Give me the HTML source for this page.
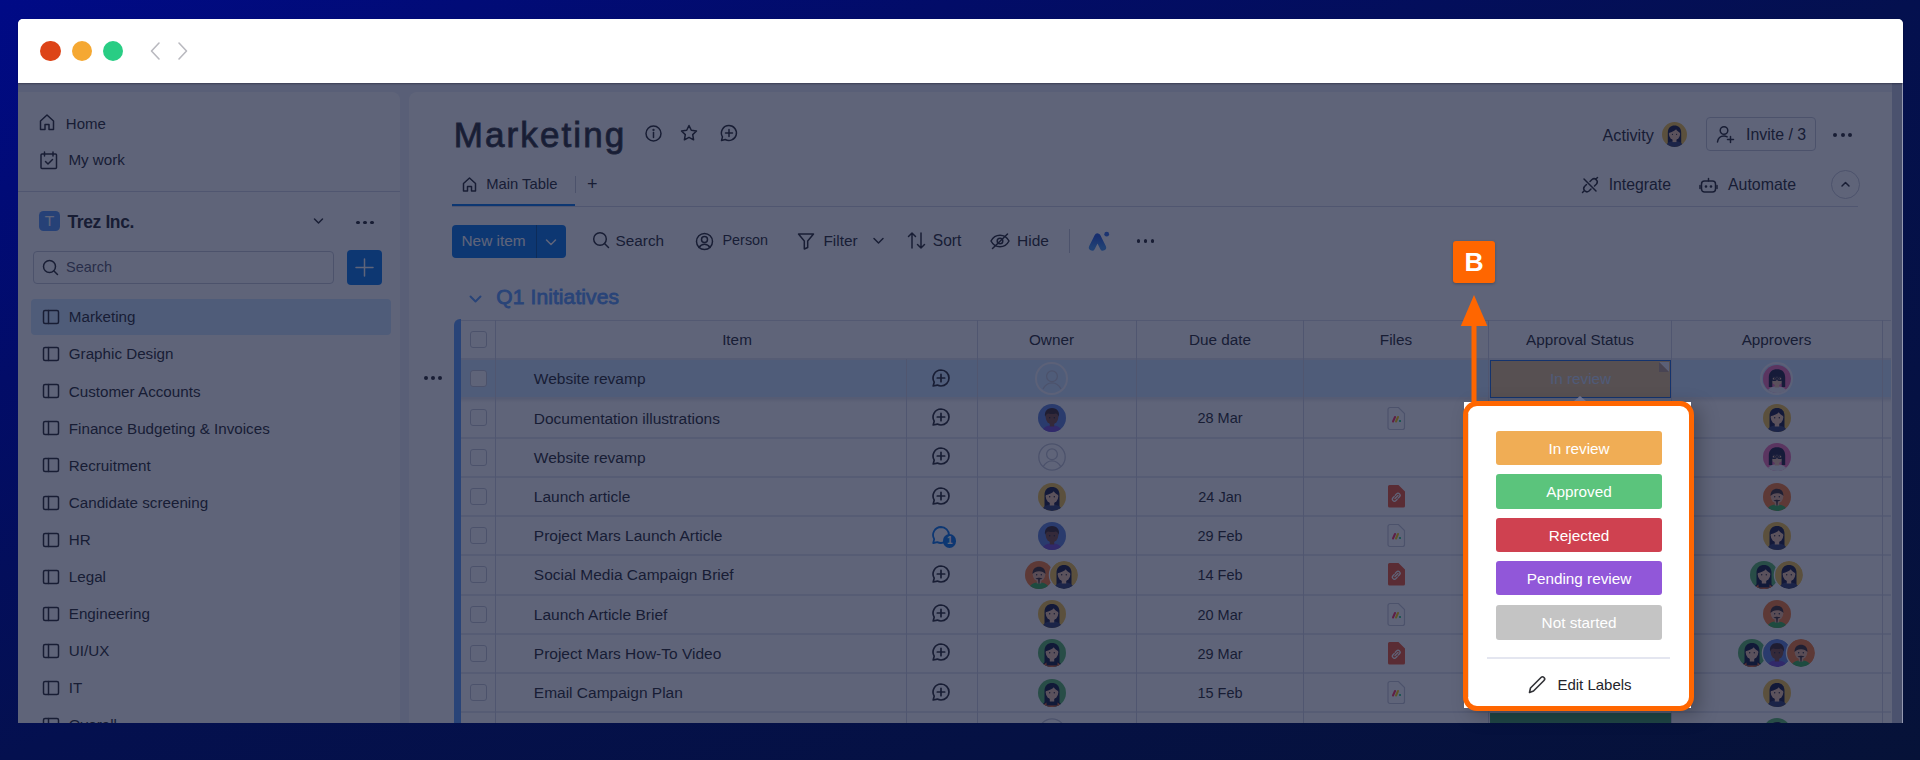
<!DOCTYPE html><html><head><meta charset="utf-8"><style>
html,body{margin:0;padding:0;}
body{width:1920px;height:760px;overflow:hidden;position:relative;font-family:"Liberation Sans", sans-serif;
background:linear-gradient(to bottom right,#000a86 0%,#020c68 25%,#04104f 50%,#061238 100%);}
.t{position:absolute;line-height:1;white-space:nowrap;}
.b{position:absolute;box-sizing:border-box;}
#win{position:absolute;left:17.5px;top:19px;width:1885px;height:704px;overflow:hidden;border-radius:5px 5px 0 0;background:#eceff8;}
#app{position:absolute;left:0;top:0;width:1920px;height:760px;}
#ov{position:absolute;left:17.5px;top:83px;width:1885px;height:640px;background:rgba(19,26,57,0.68);}
</style></head><body>

<div id="win"></div>
<div id="app" style="clip-path:inset(83px 17.5px 37px 17.5px);">
<div class="b" style="left:17.5px;top:91.5px;width:382.5px;height:668.5px;background:#fff;border-radius:0 8px 0 0;"></div>
<div class="b" style="left:409.0px;top:91.5px;width:1483.0px;height:668.5px;background:#fff;border-radius:8px 0 0 0;"></div>
<div class="b" style="left:1892.0px;top:83.0px;width:10.5px;height:677.0px;background:#c2c8dc;"></div>
<svg class="b" style="left:38.0px;top:113.0px;" width="18" height="18" viewBox="0 0 18 18" fill="none" stroke="#24252b" stroke-width="1.5" stroke-linecap="round" stroke-linejoin="round"><path d="M2.5 16.5V8L9 2l6.5 6v8.5h-4.5v-5h-4v5z"/></svg>
<div class="t" style="left:65.8px;top:115.92px;font-size:15px;color:#24252b;">Home</div>
<svg class="b" style="left:38.5px;top:150.0px;" width="20" height="20" viewBox="0 0 20 20" fill="none" stroke="#24252b" stroke-width="1.5" stroke-linecap="round" stroke-linejoin="round"><rect x="2" y="4" width="15.5" height="14.5" rx="1"/><path d="M5.5 2v4M14 2v4M6.5 11.5l2.5 2.5 4.5-4.5"/></svg>
<div class="t" style="left:68.4px;top:152.29px;font-size:15.2px;color:#24252b;">My work</div>
<div class="b" style="left:17.5px;top:190.5px;width:382.5px;height:1.0px;background:#d0d4e4;"></div>
<div class="b" style="left:38.6px;top:210.6px;width:21.8px;height:20.2px;background:#4f92f8;border-radius:4.5px;"></div>
<div class="t" style="left:-150.5px;width:400px;text-align:center;top:213.44px;font-size:15.5px;color:#fff;">T</div>
<div class="t" style="left:67.5px;top:214.13px;font-size:17.5px;color:#24252b;font-weight:bold;letter-spacing:-0.4px;">Trez Inc.</div>
<svg class="b" style="left:312.0px;top:215.0px;" width="13" height="12" viewBox="0 0 13 12" fill="none" stroke="#24252b" stroke-width="1.5" stroke-linecap="round" stroke-linejoin="round"><path d="M2.5 4l4 4 4-4"/></svg>
<div class="b" style="left:356.4px;top:220.6px;width:3.2px;height:3.2px;background:#24252b;border-radius:50%;"></div>
<div class="b" style="left:363.4px;top:220.6px;width:3.2px;height:3.2px;background:#24252b;border-radius:50%;"></div>
<div class="b" style="left:370.4px;top:220.6px;width:3.2px;height:3.2px;background:#24252b;border-radius:50%;"></div>
<div class="b" style="left:33.4px;top:250.5px;width:300.4px;height:33.9px;border:1px solid #c3c6d4;border-radius:4px;"></div>
<svg class="b" style="left:41.0px;top:258.0px;" width="19" height="19" viewBox="0 0 19 19" fill="none" stroke="#24252b" stroke-width="1.5" stroke-linecap="round" stroke-linejoin="round"><circle cx="8.5" cy="8.5" r="6"/><path d="M13 13l3.5 3.5"/></svg>
<div class="t" style="left:66.0px;top:259.90px;font-size:14.5px;color:#55566a;">Search</div>
<div class="b" style="left:347.0px;top:250.0px;width:35.0px;height:34.8px;background:#0073ea;border-radius:4px;"></div>
<svg class="b" style="left:354.0px;top:257.0px;stroke:#fff;" width="21" height="21" viewBox="0 0 21 21" fill="none" stroke="#24252b" stroke-width="1.5" stroke-linecap="round" stroke-linejoin="round"><path d="M10.5 2v17M2 10.5h17"/></svg>
<div class="b" style="left:30.9px;top:299.2px;width:360.4px;height:35.7px;background:#cce5ff;border-radius:4px;"></div>
<svg class="b" style="left:42.0px;top:309.0px;" width="18" height="16" viewBox="0 0 18 16" fill="none" stroke="#24252b" stroke-width="1.5" stroke-linecap="round" stroke-linejoin="round"><rect x="1.5" y="1.5" width="15" height="13" rx="1.5"/><path d="M6.5 1.5v13"/></svg>
<div class="t" style="left:68.8px;top:309.39px;font-size:15.2px;color:#24252b;">Marketing</div>
<svg class="b" style="left:42.0px;top:346.1px;" width="18" height="16" viewBox="0 0 18 16" fill="none" stroke="#24252b" stroke-width="1.5" stroke-linecap="round" stroke-linejoin="round"><rect x="1.5" y="1.5" width="15" height="13" rx="1.5"/><path d="M6.5 1.5v13"/></svg>
<div class="t" style="left:68.8px;top:346.49px;font-size:15.2px;color:#24252b;">Graphic Design</div>
<svg class="b" style="left:42.0px;top:383.2px;" width="18" height="16" viewBox="0 0 18 16" fill="none" stroke="#24252b" stroke-width="1.5" stroke-linecap="round" stroke-linejoin="round"><rect x="1.5" y="1.5" width="15" height="13" rx="1.5"/><path d="M6.5 1.5v13"/></svg>
<div class="t" style="left:68.8px;top:383.59px;font-size:15.2px;color:#24252b;">Customer Accounts</div>
<svg class="b" style="left:42.0px;top:420.3px;" width="18" height="16" viewBox="0 0 18 16" fill="none" stroke="#24252b" stroke-width="1.5" stroke-linecap="round" stroke-linejoin="round"><rect x="1.5" y="1.5" width="15" height="13" rx="1.5"/><path d="M6.5 1.5v13"/></svg>
<div class="t" style="left:68.8px;top:420.69px;font-size:15.2px;color:#24252b;">Finance Budgeting &amp; Invoices</div>
<svg class="b" style="left:42.0px;top:457.4px;" width="18" height="16" viewBox="0 0 18 16" fill="none" stroke="#24252b" stroke-width="1.5" stroke-linecap="round" stroke-linejoin="round"><rect x="1.5" y="1.5" width="15" height="13" rx="1.5"/><path d="M6.5 1.5v13"/></svg>
<div class="t" style="left:68.8px;top:457.79px;font-size:15.2px;color:#24252b;">Recruitment</div>
<svg class="b" style="left:42.0px;top:494.5px;" width="18" height="16" viewBox="0 0 18 16" fill="none" stroke="#24252b" stroke-width="1.5" stroke-linecap="round" stroke-linejoin="round"><rect x="1.5" y="1.5" width="15" height="13" rx="1.5"/><path d="M6.5 1.5v13"/></svg>
<div class="t" style="left:68.8px;top:494.89px;font-size:15.2px;color:#24252b;">Candidate screening</div>
<svg class="b" style="left:42.0px;top:531.6px;" width="18" height="16" viewBox="0 0 18 16" fill="none" stroke="#24252b" stroke-width="1.5" stroke-linecap="round" stroke-linejoin="round"><rect x="1.5" y="1.5" width="15" height="13" rx="1.5"/><path d="M6.5 1.5v13"/></svg>
<div class="t" style="left:68.8px;top:531.99px;font-size:15.2px;color:#24252b;">HR</div>
<svg class="b" style="left:42.0px;top:568.7px;" width="18" height="16" viewBox="0 0 18 16" fill="none" stroke="#24252b" stroke-width="1.5" stroke-linecap="round" stroke-linejoin="round"><rect x="1.5" y="1.5" width="15" height="13" rx="1.5"/><path d="M6.5 1.5v13"/></svg>
<div class="t" style="left:68.8px;top:569.09px;font-size:15.2px;color:#24252b;">Legal</div>
<svg class="b" style="left:42.0px;top:605.8px;" width="18" height="16" viewBox="0 0 18 16" fill="none" stroke="#24252b" stroke-width="1.5" stroke-linecap="round" stroke-linejoin="round"><rect x="1.5" y="1.5" width="15" height="13" rx="1.5"/><path d="M6.5 1.5v13"/></svg>
<div class="t" style="left:68.8px;top:606.19px;font-size:15.2px;color:#24252b;">Engineering</div>
<svg class="b" style="left:42.0px;top:642.9px;" width="18" height="16" viewBox="0 0 18 16" fill="none" stroke="#24252b" stroke-width="1.5" stroke-linecap="round" stroke-linejoin="round"><rect x="1.5" y="1.5" width="15" height="13" rx="1.5"/><path d="M6.5 1.5v13"/></svg>
<div class="t" style="left:68.8px;top:643.29px;font-size:15.2px;color:#24252b;">UI/UX</div>
<svg class="b" style="left:42.0px;top:680.0px;" width="18" height="16" viewBox="0 0 18 16" fill="none" stroke="#24252b" stroke-width="1.5" stroke-linecap="round" stroke-linejoin="round"><rect x="1.5" y="1.5" width="15" height="13" rx="1.5"/><path d="M6.5 1.5v13"/></svg>
<div class="t" style="left:68.8px;top:680.39px;font-size:15.2px;color:#24252b;">IT</div>
<svg class="b" style="left:42.0px;top:717.1px;" width="18" height="16" viewBox="0 0 18 16" fill="none" stroke="#24252b" stroke-width="1.5" stroke-linecap="round" stroke-linejoin="round"><rect x="1.5" y="1.5" width="15" height="13" rx="1.5"/><path d="M6.5 1.5v13"/></svg>
<div class="t" style="left:68.8px;top:717.49px;font-size:15.2px;color:#24252b;">Overall</div>
<div class="t" style="left:453.8px;top:116.55px;font-size:35px;color:#24252b;letter-spacing:2.1px;-webkit-text-stroke:0.9px #323338;">Marketing</div>
<svg class="b" style="left:644.0px;top:123.7px;" width="19" height="19" viewBox="0 0 19 19" fill="none" stroke="#24252b" stroke-width="1.5" stroke-linecap="round" stroke-linejoin="round"><circle cx="9.5" cy="9.5" r="7.5"/><path d="M9.5 8.5v5"/><circle cx="9.5" cy="6" r="0.4" fill="#323338"/></svg>
<svg class="b" style="left:678.5px;top:122.7px;" width="20" height="20" viewBox="0 0 20 20" fill="none" stroke="#24252b" stroke-width="1.5" stroke-linecap="round" stroke-linejoin="round"><path d="M10 2.5l2.3 4.8 5.2.7-3.8 3.6.9 5.2L10 14.3l-4.6 2.5.9-5.2L2.5 8l5.2-.7z"/></svg>
<svg class="b" style="left:718.5px;top:123.2px;" width="20" height="20" viewBox="0 0 20 20" fill="none" stroke="#24252b" stroke-width="1.5" stroke-linecap="round" stroke-linejoin="round"><path d="M10 2.5a7.5 7.5 0 1 1-3.8 14L2.5 17.5l1-3.6A7.5 7.5 0 0 1 10 2.5z"/><path d="M10 6.5v7M6.5 10h7"/></svg>
<svg class="b" style="left:461.0px;top:176.0px;" width="17" height="17" viewBox="0 0 17 17" fill="none" stroke="#24252b" stroke-width="1.5" stroke-linecap="round" stroke-linejoin="round"><path d="M2.5 15V7.5L8.5 2l6 5.5V15h-4v-4.5h-4V15z"/></svg>
<div class="t" style="left:486.2px;top:177.25px;font-size:14.8px;color:#24252b;">Main Table</div>
<div class="b" style="left:575.0px;top:175.6px;width:1.0px;height:17.2px;background:#c3c6d4;"></div>
<div class="t" style="left:587.0px;top:175.15px;font-size:18px;color:#24252b;">+</div>
<div class="b" style="left:452.0px;top:206.0px;width:1406.0px;height:1.0px;background:#d0d4e4;"></div>
<div class="b" style="left:452.0px;top:204.0px;width:123.0px;height:2.0px;background:#0073ea;"></div>
<div class="b" style="left:452.0px;top:225.0px;width:114.0px;height:33.0px;background:#0073ea;border-radius:4px;"></div>
<div class="b" style="left:536.0px;top:225.0px;width:1.0px;height:33.0px;background:#00519e;"></div>
<div class="t" style="left:461.5px;top:233.16px;font-size:15.4px;color:#fff;">New item</div>
<svg class="b" style="left:543.0px;top:234.0px;stroke:#fff;" width="16" height="16" viewBox="0 0 16 16" fill="none" stroke="#24252b" stroke-width="1.5" stroke-linecap="round" stroke-linejoin="round"><path d="M3.5 6l4.5 4.5L12.5 6"/></svg>
<svg class="b" style="left:591.0px;top:230.0px;" width="20" height="20" viewBox="0 0 20 20" fill="none" stroke="#24252b" stroke-width="1.5" stroke-linecap="round" stroke-linejoin="round"><circle cx="9" cy="9" r="6.3"/><path d="M13.5 13.5l4 4"/></svg>
<div class="t" style="left:615.6px;top:233.17px;font-size:15.3px;color:#24252b;">Search</div>
<svg class="b" style="left:694.0px;top:230.5px;" width="21" height="21" viewBox="0 0 21 21" fill="none" stroke="#24252b" stroke-width="1.5" stroke-linecap="round" stroke-linejoin="round"><circle cx="10.5" cy="10.5" r="8"/><circle cx="10.5" cy="8.5" r="3"/><path d="M5 16.5c1.5-2.5 3.5-3.3 5.5-3.3s4 .8 5.5 3.3"/></svg>
<div class="t" style="left:722.5px;top:233.32px;font-size:14.4px;color:#24252b;">Person</div>
<svg class="b" style="left:796.0px;top:231.0px;" width="20" height="20" viewBox="0 0 20 20" fill="none" stroke="#24252b" stroke-width="1.5" stroke-linecap="round" stroke-linejoin="round"><path d="M2.5 3h15l-5.8 7v6.5l-3.4 1.5V10z"/></svg>
<div class="t" style="left:823.4px;top:233.16px;font-size:15.4px;color:#24252b;">Filter</div>
<svg class="b" style="left:870.5px;top:235.0px;" width="15" height="12" viewBox="0 0 15 12" fill="none" stroke="#24252b" stroke-width="1.5" stroke-linecap="round" stroke-linejoin="round"><path d="M3 3.5l4.5 4.5 4.5-4.5"/></svg>
<svg class="b" style="left:906.0px;top:230.0px;" width="21" height="21" viewBox="0 0 21 21" fill="none" stroke="#24252b" stroke-width="1.5" stroke-linecap="round" stroke-linejoin="round"><path d="M6 18V3M2.5 6.5L6 3l3.5 3.5M15 3v15M11.5 14.5L15 18l3.5-3.5"/></svg>
<div class="t" style="left:932.8px;top:233.13px;font-size:15.6px;color:#24252b;">Sort</div>
<svg class="b" style="left:988.5px;top:231.0px;" width="22" height="20" viewBox="0 0 22 20" fill="none" stroke="#24252b" stroke-width="1.5" stroke-linecap="round" stroke-linejoin="round"><path d="M2 10c2-3.8 5-5.8 9-5.8s7 2 9 5.8c-2 3.8-5 5.8-9 5.8s-7-2-9-5.8z"/><circle cx="11" cy="10" r="2.8"/><path d="M3.5 17.5L18.5 3"/></svg>
<div class="t" style="left:1017.0px;top:233.14px;font-size:15.5px;color:#24252b;">Hide</div>
<div class="b" style="left:1068.5px;top:228.5px;width:1.0px;height:24.5px;background:#c3c6d4;"></div>
<svg class="b" style="left:1084px;top:228px" width="30" height="26" viewBox="0 0 30 26"><defs><linearGradient id="aig" x1="0" y1="0" x2="0" y2="1"><stop offset="0" stop-color="#1f58e0"/><stop offset="1" stop-color="#3f93f0"/></linearGradient></defs><path d="M8 19.5L13.5 8.5 19 19.5" stroke="url(#aig)" stroke-width="6.2" stroke-linecap="round" stroke-linejoin="round" fill="none"/><circle cx="22.7" cy="6.2" r="2.4" fill="#2f6be6"/></svg>
<div class="b" style="left:1136.7px;top:239.2px;width:3.6px;height:3.6px;background:#24252b;border-radius:50%;"></div>
<div class="b" style="left:1143.7px;top:239.2px;width:3.6px;height:3.6px;background:#24252b;border-radius:50%;"></div>
<div class="b" style="left:1150.7px;top:239.2px;width:3.6px;height:3.6px;background:#24252b;border-radius:50%;"></div>
<div class="t" style="left:1602.5px;top:126.73px;font-size:16.2px;color:#24252b;">Activity</div>
<div class="b" style="left:1705.5px;top:117.0px;width:110.0px;height:33.8px;border:1px solid #c3c6d4;border-radius:4px;"></div>
<svg class="b" style="left:1715.0px;top:124.0px;" width="22" height="20" viewBox="0 0 22 20" fill="none" stroke="#24252b" stroke-width="1.5" stroke-linecap="round" stroke-linejoin="round"><circle cx="9" cy="6.5" r="3.8"/><path d="M2.5 18c.5-3.8 3-6 6.5-6 1.2 0 2.3.3 3.2.8M15.5 12.5v6M12.5 15.5h6"/></svg>
<div class="t" style="left:1746.0px;top:126.68px;font-size:15.9px;color:#24252b;">Invite / 3</div>
<div class="b" style="left:1833.3px;top:132.5px;width:4.0px;height:4.0px;background:#24252b;border-radius:50%;"></div>
<div class="b" style="left:1840.5px;top:132.5px;width:4.0px;height:4.0px;background:#24252b;border-radius:50%;"></div>
<div class="b" style="left:1847.7px;top:132.5px;width:4.0px;height:4.0px;background:#24252b;border-radius:50%;"></div>
<svg class="b" style="left:1580.0px;top:175.0px;" width="20" height="20" viewBox="0 0 20 20" fill="none" stroke="#24252b" stroke-width="1.5" stroke-linecap="round" stroke-linejoin="round"><path d="M4 4l12 12M6.5 9.5L4.5 11.5a3.2 3.2 0 0 0 4.5 4.5l2-2M10 6.5l2-2a3.2 3.2 0 0 1 4.5 4.5l-2 2M2.5 17.5l2-2M15.5 4.5l2-2"/></svg>
<div class="t" style="left:1608.7px;top:177.10px;font-size:15.8px;color:#24252b;">Integrate</div>
<svg class="b" style="left:1697.5px;top:175.5px;" width="21" height="19" viewBox="0 0 21 19" fill="none" stroke="#24252b" stroke-width="1.5" stroke-linecap="round" stroke-linejoin="round"><rect x="3.5" y="5" width="14" height="11" rx="3"/><path d="M10.5 2.5V5M2 9.5v3M19 9.5v3"/><circle cx="8" cy="10.5" r=".6" fill="#323338"/><circle cx="13" cy="10.5" r=".6" fill="#323338"/></svg>
<div class="t" style="left:1728.0px;top:177.08px;font-size:15.9px;color:#24252b;">Automate</div>
<div class="b" style="left:1830.8px;top:169.7px;width:29.0px;height:29.0px;border:1px solid #c3c6d4;border-radius:50%;"></div>
<svg class="b" style="left:1838.0px;top:177.0px;" width="15" height="15" viewBox="0 0 15 15" fill="none" stroke="#24252b" stroke-width="1.5" stroke-linecap="round" stroke-linejoin="round"><path d="M4 9l3.5-3.5L11 9"/></svg>
<svg class="b" style="left:467.3px;top:291.8px;stroke:#579bfc;stroke-width:2;" width="17" height="14" viewBox="0 0 17 14" fill="none" stroke="#24252b" stroke-width="1.5" stroke-linecap="round" stroke-linejoin="round"><path d="M3.5 4.5l5 5 5-5"/></svg>
<div class="t" style="left:496.3px;top:286.27px;font-size:21px;color:#579bfc;letter-spacing:0.1px;-webkit-text-stroke:0.8px #579bfc;">Q1 Initiatives</div>
<div class="b" style="left:454.3px;top:319.3px;width:6.3px;height:440.7px;background:#579bfc;border-radius:6px 0 0 0;"></div>
<div class="b" style="left:460.6px;top:319.5px;width:1430.9px;height:1.5px;background:#d8dbe8;"></div>
<div class="b" style="left:460.6px;top:359.2px;width:1430.9px;height:39.2px;background:#cce5ff;"></div>
<div class="b" style="left:460.6px;top:398.4px;width:1430.9px;height:5.0px;background:linear-gradient(rgba(0,0,40,0.10),rgba(0,0,40,0));"></div>
<div class="b" style="left:460.6px;top:358.0px;width:1430.9px;height:2.0px;background:#e2e5ef;"></div>
<div class="b" style="left:460.6px;top:397.0px;width:1430.9px;height:2.0px;background:#e2e5ef;"></div>
<div class="b" style="left:460.6px;top:437.0px;width:1430.9px;height:2.0px;background:#e2e5ef;"></div>
<div class="b" style="left:460.6px;top:476.0px;width:1430.9px;height:2.0px;background:#e2e5ef;"></div>
<div class="b" style="left:460.6px;top:515.0px;width:1430.9px;height:2.0px;background:#e2e5ef;"></div>
<div class="b" style="left:460.6px;top:554.0px;width:1430.9px;height:2.0px;background:#e2e5ef;"></div>
<div class="b" style="left:460.6px;top:594.0px;width:1430.9px;height:2.0px;background:#e2e5ef;"></div>
<div class="b" style="left:460.6px;top:633.0px;width:1430.9px;height:2.0px;background:#e2e5ef;"></div>
<div class="b" style="left:460.6px;top:672.0px;width:1430.9px;height:2.0px;background:#e2e5ef;"></div>
<div class="b" style="left:460.6px;top:711.0px;width:1430.9px;height:2.0px;background:#e2e5ef;"></div>
<div class="b" style="left:460.6px;top:750.0px;width:1430.9px;height:2.0px;background:#e2e5ef;"></div>
<div class="b" style="left:495.0px;top:320.3px;width:1.0px;height:439.7px;background:#d0d4e4;"></div>
<div class="b" style="left:977.0px;top:320.3px;width:1.0px;height:439.7px;background:#d0d4e4;"></div>
<div class="b" style="left:1136.0px;top:320.3px;width:1.0px;height:439.7px;background:#d0d4e4;"></div>
<div class="b" style="left:1303.0px;top:320.3px;width:1.0px;height:439.7px;background:#d0d4e4;"></div>
<div class="b" style="left:1488.0px;top:320.3px;width:1.0px;height:439.7px;background:#d0d4e4;"></div>
<div class="b" style="left:1671.0px;top:320.3px;width:1.0px;height:439.7px;background:#d0d4e4;"></div>
<div class="b" style="left:1881.5px;top:320.3px;width:1.0px;height:439.7px;background:#d0d4e4;"></div>
<div class="b" style="left:905.5px;top:359.2px;width:1.0px;height:400.8px;background:#d0d4e4;"></div>
<div class="b" style="left:469.7px;top:331.0px;width:17.0px;height:17.0px;border:1px solid #c3c6d4;border-radius:3px;"></div>
<div class="b" style="left:469.7px;top:370.2px;width:17.0px;height:17.0px;border:1px solid #c3c6d4;border-radius:3px;background:#fff;"></div>
<div class="b" style="left:469.7px;top:409.4px;width:17.0px;height:17.0px;border:1px solid #c3c6d4;border-radius:3px;"></div>
<div class="b" style="left:469.7px;top:448.6px;width:17.0px;height:17.0px;border:1px solid #c3c6d4;border-radius:3px;"></div>
<div class="b" style="left:469.7px;top:487.9px;width:17.0px;height:17.0px;border:1px solid #c3c6d4;border-radius:3px;"></div>
<div class="b" style="left:469.7px;top:527.1px;width:17.0px;height:17.0px;border:1px solid #c3c6d4;border-radius:3px;"></div>
<div class="b" style="left:469.7px;top:566.3px;width:17.0px;height:17.0px;border:1px solid #c3c6d4;border-radius:3px;"></div>
<div class="b" style="left:469.7px;top:605.5px;width:17.0px;height:17.0px;border:1px solid #c3c6d4;border-radius:3px;"></div>
<div class="b" style="left:469.7px;top:644.8px;width:17.0px;height:17.0px;border:1px solid #c3c6d4;border-radius:3px;"></div>
<div class="b" style="left:469.7px;top:684.0px;width:17.0px;height:17.0px;border:1px solid #c3c6d4;border-radius:3px;"></div>
<div class="b" style="left:469.7px;top:723.2px;width:17.0px;height:17.0px;border:1px solid #c3c6d4;border-radius:3px;"></div>
<div class="t" style="left:537.0px;width:400px;text-align:center;top:331.57px;font-size:15.3px;color:#24252b;">Item</div>
<div class="t" style="left:851.5px;width:400px;text-align:center;top:331.57px;font-size:15.3px;color:#24252b;">Owner</div>
<div class="t" style="left:1020.0px;width:400px;text-align:center;top:331.57px;font-size:15.3px;color:#24252b;">Due date</div>
<div class="t" style="left:1196.0px;width:400px;text-align:center;top:331.57px;font-size:15.3px;color:#24252b;">Files</div>
<div class="t" style="left:1380.0px;width:400px;text-align:center;top:331.57px;font-size:15.3px;color:#24252b;">Approval Status</div>
<div class="t" style="left:1576.5px;width:400px;text-align:center;top:331.57px;font-size:15.3px;color:#24252b;">Approvers</div>
<div class="b" style="left:424.3px;top:376.4px;width:4.0px;height:4.0px;background:#24252b;border-radius:50%;"></div>
<div class="b" style="left:431.0px;top:376.4px;width:4.0px;height:4.0px;background:#24252b;border-radius:50%;"></div>
<div class="b" style="left:437.7px;top:376.4px;width:4.0px;height:4.0px;background:#24252b;border-radius:50%;"></div>
<div class="t" style="left:533.8px;top:371.34px;font-size:15.5px;color:#24252b;">Website revamp</div>
<svg class="b" style="left:930.0px;top:367.8px;stroke-width:1.7;" width="22" height="22" viewBox="0 0 22 22" fill="none" stroke="#24252b" stroke-width="1.5" stroke-linecap="round" stroke-linejoin="round"><path d="M11 2a8 8 0 1 1 0 16c-1.3 0-2.6-.3-3.7-.9L3.2 18l1-3.9A8 8 0 0 1 11 2z"/><path d="M11 6.3v7.4M7.3 10h7.4"/></svg>
<div class="t" style="left:533.8px;top:410.56px;font-size:15.5px;color:#24252b;">Documentation illustrations</div>
<svg class="b" style="left:930.0px;top:407.0px;stroke-width:1.7;" width="22" height="22" viewBox="0 0 22 22" fill="none" stroke="#24252b" stroke-width="1.5" stroke-linecap="round" stroke-linejoin="round"><path d="M11 2a8 8 0 1 1 0 16c-1.3 0-2.6-.3-3.7-.9L3.2 18l1-3.9A8 8 0 0 1 11 2z"/><path d="M11 6.3v7.4M7.3 10h7.4"/></svg>
<div class="t" style="left:1020.0px;width:400px;text-align:center;top:411.42px;font-size:14.5px;color:#24252b;">28 Mar</div>
<svg class="b" style="left:1386.5px;top:405.5px" width="19" height="25" viewBox="0 0 19 25"><path d="M3 1.5h8.5l6 6V21.5a2 2 0 0 1-2 2H3a2 2 0 0 1-2-2V3.5a2 2 0 0 1 2-2z" fill="#fff" stroke="#c3c6d4" stroke-width="1.2"/><path d="M6 15.5l2-4.5" stroke="#fb275d" stroke-width="2" stroke-linecap="round"/><path d="M9 15.5l2-4.5" stroke="#ffcc00" stroke-width="2" stroke-linecap="round"/><circle cx="13" cy="15" r="1.1" fill="#00ca72"/></svg>
<div class="t" style="left:533.8px;top:449.78px;font-size:15.5px;color:#24252b;">Website revamp</div>
<svg class="b" style="left:930.0px;top:446.2px;stroke-width:1.7;" width="22" height="22" viewBox="0 0 22 22" fill="none" stroke="#24252b" stroke-width="1.5" stroke-linecap="round" stroke-linejoin="round"><path d="M11 2a8 8 0 1 1 0 16c-1.3 0-2.6-.3-3.7-.9L3.2 18l1-3.9A8 8 0 0 1 11 2z"/><path d="M11 6.3v7.4M7.3 10h7.4"/></svg>
<div class="t" style="left:533.8px;top:489.00px;font-size:15.5px;color:#24252b;">Launch article</div>
<svg class="b" style="left:930.0px;top:485.5px;stroke-width:1.7;" width="22" height="22" viewBox="0 0 22 22" fill="none" stroke="#24252b" stroke-width="1.5" stroke-linecap="round" stroke-linejoin="round"><path d="M11 2a8 8 0 1 1 0 16c-1.3 0-2.6-.3-3.7-.9L3.2 18l1-3.9A8 8 0 0 1 11 2z"/><path d="M11 6.3v7.4M7.3 10h7.4"/></svg>
<div class="t" style="left:1020.0px;width:400px;text-align:center;top:489.86px;font-size:14.5px;color:#24252b;">24 Jan</div>
<svg class="b" style="left:1386.5px;top:484.0px" width="19" height="25" viewBox="0 0 19 25"><path d="M2.5 1h9l6.5 6.5V22a1.5 1.5 0 0 1-1.5 1.5h-14A1.5 1.5 0 0 1 1 22V2.5A1.5 1.5 0 0 1 2.5 1z" fill="#f0522a"/><g stroke="#fff" stroke-width="1.3" fill="none" stroke-linecap="round"><path d="M8.3 11.2l1.3-1.3a2 2 0 0 1 2.9 2.9l-1.3 1.3"/><path d="M10.2 15.3l-1.3 1.3a2 2 0 0 1-2.9-2.9l1.3-1.3"/><path d="M8 14.5l3-3"/></g></svg>
<div class="t" style="left:533.8px;top:528.22px;font-size:15.5px;color:#24252b;">Project Mars Launch Article</div>
<svg class="b" style="left:930.0px;top:524.7px;stroke:#0073ea;stroke-width:1.8;" width="22" height="22" viewBox="0 0 22 22" fill="none" stroke="#24252b" stroke-width="1.5" stroke-linecap="round" stroke-linejoin="round"><path d="M11 2a8 8 0 1 1 0 16c-1.3 0-2.6-.3-3.7-.9L3.2 18l1-3.9A8 8 0 0 1 11 2z"/></svg>
<div class="b" style="left:943.0px;top:534.2px;width:13.4px;height:13.4px;background:#0073ea;border-radius:50%;"></div>
<div class="t" style="left:749.7px;width:400px;text-align:center;top:535.70px;font-size:10px;color:#fff;font-weight:bold;">1</div>
<div class="t" style="left:1020.0px;width:400px;text-align:center;top:529.08px;font-size:14.5px;color:#24252b;">29 Feb</div>
<svg class="b" style="left:1386.5px;top:523.2px" width="19" height="25" viewBox="0 0 19 25"><path d="M3 1.5h8.5l6 6V21.5a2 2 0 0 1-2 2H3a2 2 0 0 1-2-2V3.5a2 2 0 0 1 2-2z" fill="#fff" stroke="#c3c6d4" stroke-width="1.2"/><path d="M6 15.5l2-4.5" stroke="#fb275d" stroke-width="2" stroke-linecap="round"/><path d="M9 15.5l2-4.5" stroke="#ffcc00" stroke-width="2" stroke-linecap="round"/><circle cx="13" cy="15" r="1.1" fill="#00ca72"/></svg>
<div class="t" style="left:533.8px;top:567.44px;font-size:15.5px;color:#24252b;">Social Media Campaign Brief</div>
<svg class="b" style="left:930.0px;top:563.9px;stroke-width:1.7;" width="22" height="22" viewBox="0 0 22 22" fill="none" stroke="#24252b" stroke-width="1.5" stroke-linecap="round" stroke-linejoin="round"><path d="M11 2a8 8 0 1 1 0 16c-1.3 0-2.6-.3-3.7-.9L3.2 18l1-3.9A8 8 0 0 1 11 2z"/><path d="M11 6.3v7.4M7.3 10h7.4"/></svg>
<div class="t" style="left:1020.0px;width:400px;text-align:center;top:568.30px;font-size:14.5px;color:#24252b;">14 Feb</div>
<svg class="b" style="left:1386.5px;top:562.4px" width="19" height="25" viewBox="0 0 19 25"><path d="M2.5 1h9l6.5 6.5V22a1.5 1.5 0 0 1-1.5 1.5h-14A1.5 1.5 0 0 1 1 22V2.5A1.5 1.5 0 0 1 2.5 1z" fill="#f0522a"/><g stroke="#fff" stroke-width="1.3" fill="none" stroke-linecap="round"><path d="M8.3 11.2l1.3-1.3a2 2 0 0 1 2.9 2.9l-1.3 1.3"/><path d="M10.2 15.3l-1.3 1.3a2 2 0 0 1-2.9-2.9l1.3-1.3"/><path d="M8 14.5l3-3"/></g></svg>
<div class="t" style="left:533.8px;top:606.66px;font-size:15.5px;color:#24252b;">Launch Article Brief</div>
<svg class="b" style="left:930.0px;top:603.1px;stroke-width:1.7;" width="22" height="22" viewBox="0 0 22 22" fill="none" stroke="#24252b" stroke-width="1.5" stroke-linecap="round" stroke-linejoin="round"><path d="M11 2a8 8 0 1 1 0 16c-1.3 0-2.6-.3-3.7-.9L3.2 18l1-3.9A8 8 0 0 1 11 2z"/><path d="M11 6.3v7.4M7.3 10h7.4"/></svg>
<div class="t" style="left:1020.0px;width:400px;text-align:center;top:607.52px;font-size:14.5px;color:#24252b;">20 Mar</div>
<svg class="b" style="left:1386.5px;top:601.6px" width="19" height="25" viewBox="0 0 19 25"><path d="M3 1.5h8.5l6 6V21.5a2 2 0 0 1-2 2H3a2 2 0 0 1-2-2V3.5a2 2 0 0 1 2-2z" fill="#fff" stroke="#c3c6d4" stroke-width="1.2"/><path d="M6 15.5l2-4.5" stroke="#fb275d" stroke-width="2" stroke-linecap="round"/><path d="M9 15.5l2-4.5" stroke="#ffcc00" stroke-width="2" stroke-linecap="round"/><circle cx="13" cy="15" r="1.1" fill="#00ca72"/></svg>
<div class="t" style="left:533.8px;top:645.88px;font-size:15.5px;color:#24252b;">Project Mars How-To Video</div>
<svg class="b" style="left:930.0px;top:642.4px;stroke-width:1.7;" width="22" height="22" viewBox="0 0 22 22" fill="none" stroke="#24252b" stroke-width="1.5" stroke-linecap="round" stroke-linejoin="round"><path d="M11 2a8 8 0 1 1 0 16c-1.3 0-2.6-.3-3.7-.9L3.2 18l1-3.9A8 8 0 0 1 11 2z"/><path d="M11 6.3v7.4M7.3 10h7.4"/></svg>
<div class="t" style="left:1020.0px;width:400px;text-align:center;top:646.74px;font-size:14.5px;color:#24252b;">29 Mar</div>
<svg class="b" style="left:1386.5px;top:640.9px" width="19" height="25" viewBox="0 0 19 25"><path d="M2.5 1h9l6.5 6.5V22a1.5 1.5 0 0 1-1.5 1.5h-14A1.5 1.5 0 0 1 1 22V2.5A1.5 1.5 0 0 1 2.5 1z" fill="#f0522a"/><g stroke="#fff" stroke-width="1.3" fill="none" stroke-linecap="round"><path d="M8.3 11.2l1.3-1.3a2 2 0 0 1 2.9 2.9l-1.3 1.3"/><path d="M10.2 15.3l-1.3 1.3a2 2 0 0 1-2.9-2.9l1.3-1.3"/><path d="M8 14.5l3-3"/></g></svg>
<div class="t" style="left:533.8px;top:685.10px;font-size:15.5px;color:#24252b;">Email Campaign Plan</div>
<svg class="b" style="left:930.0px;top:681.6px;stroke-width:1.7;" width="22" height="22" viewBox="0 0 22 22" fill="none" stroke="#24252b" stroke-width="1.5" stroke-linecap="round" stroke-linejoin="round"><path d="M11 2a8 8 0 1 1 0 16c-1.3 0-2.6-.3-3.7-.9L3.2 18l1-3.9A8 8 0 0 1 11 2z"/><path d="M11 6.3v7.4M7.3 10h7.4"/></svg>
<div class="t" style="left:1020.0px;width:400px;text-align:center;top:685.96px;font-size:14.5px;color:#24252b;">15 Feb</div>
<svg class="b" style="left:1386.5px;top:680.1px" width="19" height="25" viewBox="0 0 19 25"><path d="M3 1.5h8.5l6 6V21.5a2 2 0 0 1-2 2H3a2 2 0 0 1-2-2V3.5a2 2 0 0 1 2-2z" fill="#fff" stroke="#c3c6d4" stroke-width="1.2"/><path d="M6 15.5l2-4.5" stroke="#fb275d" stroke-width="2" stroke-linecap="round"/><path d="M9 15.5l2-4.5" stroke="#ffcc00" stroke-width="2" stroke-linecap="round"/><circle cx="13" cy="15" r="1.1" fill="#00ca72"/></svg>
<div class="b" style="left:1489.6px;top:360.0px;width:181.4px;height:37.8px;background:#e6c186;border:1.6px solid #1667d8;"></div>
<svg class="b" style="left:1659.3px;top:361.6px" width="10" height="10" viewBox="0 0 10 10"><path d="M0 0H10V10z" fill="#f2f3f8"/><path d="M0 0L10 10H0z" fill="#b89c88"/></svg>
<div class="t" style="left:1380.5px;width:400px;text-align:center;top:370.77px;font-size:15.3px;color:#cde0fc;">In review</div>
<div class="b" style="left:1489.6px;top:712.7px;width:181.4px;height:47.3px;background:#389f5d;"></div>
<svg class="b" style="left:1037.5px;top:364.8px" width="28" height="28" viewBox="0 0 28 28" fill="none" stroke="#c3c6d4" stroke-width="1.3"><circle cx="14" cy="11.3" r="5.4"/><path d="M5 24c2.2-4.3 5.3-6.2 9-6.2s6.8 1.9 9 6.2"/></svg>
<div class="b" style="left:1035.3px;top:362.4px;width:32.4px;height:32.4px;border:2.4px solid #f4f5fa;border-radius:50%;"></div>
<svg class="b" style="left:1762.5px;top:364.8px;overflow:visible" width="28" height="28" viewBox="0 0 28 28"><circle cx="14" cy="14" r="14" fill="#f06cb0"/><clipPath id="c2"><circle cx="14" cy="14" r="14"/></clipPath><g clip-path="url(#c2)"><path d="M3.5 30c0-6 4.5-8.5 10.5-8.5s10.5 2.5 10.5 8.5z" fill="#f0f0f5"/><rect x="11.8" y="17" width="4.4" height="5.5" fill="#f0c2a4"/><ellipse cx="14" cy="13.3" rx="6.3" ry="6.9" fill="#f0c2a4"/><path d="M5.8 22V12.5C5.8 6.8 9.3 4.2 14 4.2s8.2 2.6 8.2 8.3V22h-3.5V11.5h-9.4V22z" fill="#1c1e3a"/><path d="M8.5 11.8c0-4 2.5-6 5.5-6s5.5 2 5.5 6z" fill="#1c1e3a"/><g fill="none" stroke="#1c1e3a" stroke-width="1.4"><rect x="9" y="12" width="4.2" height="3.2" rx="1"/><rect x="14.8" y="12" width="4.2" height="3.2" rx="1"/></g><circle cx="11.7" cy="13.8" r=".7" fill="#1e1e2e"/><circle cx="16.3" cy="13.8" r=".7" fill="#1e1e2e"/></g></svg>
<div class="b" style="left:1760.3px;top:362.4px;width:32.4px;height:32.4px;border:2.4px solid #f4f5fa;border-radius:50%;"></div>
<svg class="b" style="left:1037.5px;top:404.0px;overflow:visible" width="28" height="28" viewBox="0 0 28 28"><circle cx="14" cy="14" r="14" fill="#5a80d8"/><clipPath id="c3"><circle cx="14" cy="14" r="14"/></clipPath><g clip-path="url(#c3)"><path d="M3.5 30c0-6 4.5-8.5 10.5-8.5s10.5 2.5 10.5 8.5z" fill="#7048d0"/><rect x="11.8" y="17" width="4.4" height="5.5" fill="#7a4a3a"/><ellipse cx="14" cy="13.3" rx="6.3" ry="6.9" fill="#7a4a3a"/><path d="M7.2 13c-1.2-5 1.5-9 6.8-9s8 4 6.8 9c-.6-2.2-2-3.6-3.2-3.6-1.2.9-5.8.9-7.2 0-1.2 0-2.6 1.4-3.2 3.6z" fill="#3a2525"/><circle cx="11.7" cy="13.8" r=".7" fill="#1e1e2e"/><circle cx="16.3" cy="13.8" r=".7" fill="#1e1e2e"/></g></svg>
<svg class="b" style="left:1762.5px;top:404.0px;overflow:visible" width="28" height="28" viewBox="0 0 28 28"><circle cx="14" cy="14" r="14" fill="#f2c245"/><clipPath id="c4"><circle cx="14" cy="14" r="14"/></clipPath><g clip-path="url(#c4)"><path d="M6.5 25V12C6.5 6.5 9.8 4 14 4s7.5 2.5 7.5 8V25z" fill="#14183a"/><path d="M3.5 30c0-6 4.5-8.5 10.5-8.5s10.5 2.5 10.5 8.5z" fill="#2d3a66"/><rect x="11.8" y="17" width="4.4" height="5.5" fill="#f3c6a5"/><ellipse cx="14" cy="13.3" rx="6.3" ry="6.9" fill="#f3c6a5"/><path d="M7.6 12.2c0-4.6 2.6-7.2 6.4-7.2s6.4 2.6 6.4 7.2c-2.3-1-4-2.8-4.6-4-1.2 1.4-4.6 3.4-8.2 4z" fill="#14183a"/><circle cx="11.7" cy="13.8" r=".7" fill="#1e1e2e"/><circle cx="16.3" cy="13.8" r=".7" fill="#1e1e2e"/></g></svg>
<svg class="b" style="left:1037.5px;top:443.2px" width="28" height="28" viewBox="0 0 28 28" fill="none" stroke="#c3c6d4" stroke-width="1.3"><circle cx="14" cy="14" r="13.2"/><circle cx="14" cy="11.3" r="5.4"/><path d="M5 24c2.2-4.3 5.3-6.2 9-6.2s6.8 1.9 9 6.2"/></svg>
<svg class="b" style="left:1762.5px;top:443.2px;overflow:visible" width="28" height="28" viewBox="0 0 28 28"><circle cx="14" cy="14" r="14" fill="#f06cb0"/><clipPath id="c6"><circle cx="14" cy="14" r="14"/></clipPath><g clip-path="url(#c6)"><path d="M3.5 30c0-6 4.5-8.5 10.5-8.5s10.5 2.5 10.5 8.5z" fill="#f0f0f5"/><rect x="11.8" y="17" width="4.4" height="5.5" fill="#f0c2a4"/><ellipse cx="14" cy="13.3" rx="6.3" ry="6.9" fill="#f0c2a4"/><path d="M5.8 22V12.5C5.8 6.8 9.3 4.2 14 4.2s8.2 2.6 8.2 8.3V22h-3.5V11.5h-9.4V22z" fill="#1c1e3a"/><path d="M8.5 11.8c0-4 2.5-6 5.5-6s5.5 2 5.5 6z" fill="#1c1e3a"/><g fill="none" stroke="#1c1e3a" stroke-width="1.4"><rect x="9" y="12" width="4.2" height="3.2" rx="1"/><rect x="14.8" y="12" width="4.2" height="3.2" rx="1"/></g><circle cx="11.7" cy="13.8" r=".7" fill="#1e1e2e"/><circle cx="16.3" cy="13.8" r=".7" fill="#1e1e2e"/></g></svg>
<svg class="b" style="left:1037.5px;top:482.5px;overflow:visible" width="28" height="28" viewBox="0 0 28 28"><circle cx="14" cy="14" r="14" fill="#f2c245"/><clipPath id="c7"><circle cx="14" cy="14" r="14"/></clipPath><g clip-path="url(#c7)"><path d="M6.5 25V12C6.5 6.5 9.8 4 14 4s7.5 2.5 7.5 8V25z" fill="#14183a"/><path d="M3.5 30c0-6 4.5-8.5 10.5-8.5s10.5 2.5 10.5 8.5z" fill="#2d3a66"/><rect x="11.8" y="17" width="4.4" height="5.5" fill="#f3c6a5"/><ellipse cx="14" cy="13.3" rx="6.3" ry="6.9" fill="#f3c6a5"/><path d="M7.6 12.2c0-4.6 2.6-7.2 6.4-7.2s6.4 2.6 6.4 7.2c-2.3-1-4-2.8-4.6-4-1.2 1.4-4.6 3.4-8.2 4z" fill="#14183a"/><circle cx="11.7" cy="13.8" r=".7" fill="#1e1e2e"/><circle cx="16.3" cy="13.8" r=".7" fill="#1e1e2e"/></g></svg>
<svg class="b" style="left:1762.5px;top:482.5px;overflow:visible" width="28" height="28" viewBox="0 0 28 28"><circle cx="14" cy="14" r="14" fill="#f87a30"/><clipPath id="c8"><circle cx="14" cy="14" r="14"/></clipPath><g clip-path="url(#c8)"><path d="M3.5 30c0-6 4.5-8.5 10.5-8.5s10.5 2.5 10.5 8.5z" fill="#35b050"/><rect x="11.8" y="17" width="4.4" height="5.5" fill="#efb893"/><ellipse cx="14" cy="13.3" rx="6.3" ry="6.9" fill="#efb893"/><path d="M7.5 13c0-5 2.8-7.3 6.5-7.3s6.5 2.3 6.5 7.3c-1.4-1.7-3.6-2.8-6.5-2.8s-5.1 1.1-6.5 2.8z" fill="#3a2a28"/><path d="M10.5 17.8c1.1-.9 2.3-1.1 3.5-1.1s2.4.2 3.5 1.1c-.9.4-2.3.5-3.5.5s-2.6-.1-3.5-.5zM13.1 18.2h1.8l-.35 4.3h-1.1z" fill="#3a2a28"/><circle cx="11.7" cy="13.8" r=".7" fill="#1e1e2e"/><circle cx="16.3" cy="13.8" r=".7" fill="#1e1e2e"/></g></svg>
<svg class="b" style="left:1037.5px;top:521.7px;overflow:visible" width="28" height="28" viewBox="0 0 28 28"><circle cx="14" cy="14" r="14" fill="#5a80d8"/><clipPath id="c9"><circle cx="14" cy="14" r="14"/></clipPath><g clip-path="url(#c9)"><path d="M3.5 30c0-6 4.5-8.5 10.5-8.5s10.5 2.5 10.5 8.5z" fill="#7048d0"/><rect x="11.8" y="17" width="4.4" height="5.5" fill="#7a4a3a"/><ellipse cx="14" cy="13.3" rx="6.3" ry="6.9" fill="#7a4a3a"/><path d="M7.2 13c-1.2-5 1.5-9 6.8-9s8 4 6.8 9c-.6-2.2-2-3.6-3.2-3.6-1.2.9-5.8.9-7.2 0-1.2 0-2.6 1.4-3.2 3.6z" fill="#3a2525"/><circle cx="11.7" cy="13.8" r=".7" fill="#1e1e2e"/><circle cx="16.3" cy="13.8" r=".7" fill="#1e1e2e"/></g></svg>
<svg class="b" style="left:1762.5px;top:521.7px;overflow:visible" width="28" height="28" viewBox="0 0 28 28"><circle cx="14" cy="14" r="14" fill="#f2c245"/><clipPath id="c10"><circle cx="14" cy="14" r="14"/></clipPath><g clip-path="url(#c10)"><path d="M6.5 25V12C6.5 6.5 9.8 4 14 4s7.5 2.5 7.5 8V25z" fill="#14183a"/><path d="M3.5 30c0-6 4.5-8.5 10.5-8.5s10.5 2.5 10.5 8.5z" fill="#2d3a66"/><rect x="11.8" y="17" width="4.4" height="5.5" fill="#f3c6a5"/><ellipse cx="14" cy="13.3" rx="6.3" ry="6.9" fill="#f3c6a5"/><path d="M7.6 12.2c0-4.6 2.6-7.2 6.4-7.2s6.4 2.6 6.4 7.2c-2.3-1-4-2.8-4.6-4-1.2 1.4-4.6 3.4-8.2 4z" fill="#14183a"/><circle cx="11.7" cy="13.8" r=".7" fill="#1e1e2e"/><circle cx="16.3" cy="13.8" r=".7" fill="#1e1e2e"/></g></svg>
<svg class="b" style="left:1025.4px;top:560.9px;overflow:visible" width="28" height="28" viewBox="0 0 28 28"><circle cx="14" cy="14" r="14" fill="#f87a30"/><clipPath id="c11"><circle cx="14" cy="14" r="14"/></clipPath><g clip-path="url(#c11)"><path d="M3.5 30c0-6 4.5-8.5 10.5-8.5s10.5 2.5 10.5 8.5z" fill="#35b050"/><rect x="11.8" y="17" width="4.4" height="5.5" fill="#efb893"/><ellipse cx="14" cy="13.3" rx="6.3" ry="6.9" fill="#efb893"/><path d="M7.5 13c0-5 2.8-7.3 6.5-7.3s6.5 2.3 6.5 7.3c-1.4-1.7-3.6-2.8-6.5-2.8s-5.1 1.1-6.5 2.8z" fill="#3a2a28"/><path d="M10.5 17.8c1.1-.9 2.3-1.1 3.5-1.1s2.4.2 3.5 1.1c-.9.4-2.3.5-3.5.5s-2.6-.1-3.5-.5zM13.1 18.2h1.8l-.35 4.3h-1.1z" fill="#3a2a28"/><circle cx="11.7" cy="13.8" r=".7" fill="#1e1e2e"/><circle cx="16.3" cy="13.8" r=".7" fill="#1e1e2e"/></g></svg>
<svg class="b" style="left:1049.6px;top:560.9px;overflow:visible" width="28" height="28" viewBox="0 0 28 28"><circle cx="14" cy="14" r="14" fill="#f2c245"/><clipPath id="c12"><circle cx="14" cy="14" r="14"/></clipPath><g clip-path="url(#c12)"><path d="M6.5 25V12C6.5 6.5 9.8 4 14 4s7.5 2.5 7.5 8V25z" fill="#14183a"/><path d="M3.5 30c0-6 4.5-8.5 10.5-8.5s10.5 2.5 10.5 8.5z" fill="#2d3a66"/><rect x="11.8" y="17" width="4.4" height="5.5" fill="#f3c6a5"/><ellipse cx="14" cy="13.3" rx="6.3" ry="6.9" fill="#f3c6a5"/><path d="M7.6 12.2c0-4.6 2.6-7.2 6.4-7.2s6.4 2.6 6.4 7.2c-2.3-1-4-2.8-4.6-4-1.2 1.4-4.6 3.4-8.2 4z" fill="#14183a"/><circle cx="11.7" cy="13.8" r=".7" fill="#1e1e2e"/><circle cx="16.3" cy="13.8" r=".7" fill="#1e1e2e"/></g><circle cx="14" cy="14" r="14.6" fill="none" stroke="#fff" stroke-width="1.3"/></svg>
<svg class="b" style="left:1750.4px;top:560.9px;overflow:visible" width="28" height="28" viewBox="0 0 28 28"><circle cx="14" cy="14" r="14" fill="#55b865"/><clipPath id="c13"><circle cx="14" cy="14" r="14"/></clipPath><g clip-path="url(#c13)"><path d="M6.5 25V12C6.5 6.5 9.8 4 14 4s7.5 2.5 7.5 8V25z" fill="#0f1735"/><path d="M3.5 30c0-6 4.5-8.5 10.5-8.5s10.5 2.5 10.5 8.5z" fill="#0f1735"/><path d="M5 26l4.5-3h9l4.5 3-2 3H7z" fill="#ee6a2a"/><path d="M8.5 21h11v5.5h-11z" fill="#0f1735"/><rect x="11.8" y="17" width="4.4" height="5.5" fill="#f0c4a6"/><ellipse cx="14" cy="13.3" rx="6.3" ry="6.9" fill="#f0c4a6"/><path d="M7.6 12.2c0-4.6 2.6-7.2 6.4-7.2s6.4 2.6 6.4 7.2c-2.3-1-4-2.8-4.6-4-1.2 1.4-4.6 3.4-8.2 4z" fill="#0f1735"/><circle cx="11.7" cy="13.8" r=".7" fill="#1e1e2e"/><circle cx="16.3" cy="13.8" r=".7" fill="#1e1e2e"/></g></svg>
<svg class="b" style="left:1774.6px;top:560.9px;overflow:visible" width="28" height="28" viewBox="0 0 28 28"><circle cx="14" cy="14" r="14" fill="#f2c245"/><clipPath id="c14"><circle cx="14" cy="14" r="14"/></clipPath><g clip-path="url(#c14)"><path d="M6.5 25V12C6.5 6.5 9.8 4 14 4s7.5 2.5 7.5 8V25z" fill="#14183a"/><path d="M3.5 30c0-6 4.5-8.5 10.5-8.5s10.5 2.5 10.5 8.5z" fill="#2d3a66"/><rect x="11.8" y="17" width="4.4" height="5.5" fill="#f3c6a5"/><ellipse cx="14" cy="13.3" rx="6.3" ry="6.9" fill="#f3c6a5"/><path d="M7.6 12.2c0-4.6 2.6-7.2 6.4-7.2s6.4 2.6 6.4 7.2c-2.3-1-4-2.8-4.6-4-1.2 1.4-4.6 3.4-8.2 4z" fill="#14183a"/><circle cx="11.7" cy="13.8" r=".7" fill="#1e1e2e"/><circle cx="16.3" cy="13.8" r=".7" fill="#1e1e2e"/></g><circle cx="14" cy="14" r="14.6" fill="none" stroke="#fff" stroke-width="1.3"/></svg>
<svg class="b" style="left:1037.5px;top:600.1px;overflow:visible" width="28" height="28" viewBox="0 0 28 28"><circle cx="14" cy="14" r="14" fill="#f2c245"/><clipPath id="c15"><circle cx="14" cy="14" r="14"/></clipPath><g clip-path="url(#c15)"><path d="M6.5 25V12C6.5 6.5 9.8 4 14 4s7.5 2.5 7.5 8V25z" fill="#14183a"/><path d="M3.5 30c0-6 4.5-8.5 10.5-8.5s10.5 2.5 10.5 8.5z" fill="#2d3a66"/><rect x="11.8" y="17" width="4.4" height="5.5" fill="#f3c6a5"/><ellipse cx="14" cy="13.3" rx="6.3" ry="6.9" fill="#f3c6a5"/><path d="M7.6 12.2c0-4.6 2.6-7.2 6.4-7.2s6.4 2.6 6.4 7.2c-2.3-1-4-2.8-4.6-4-1.2 1.4-4.6 3.4-8.2 4z" fill="#14183a"/><circle cx="11.7" cy="13.8" r=".7" fill="#1e1e2e"/><circle cx="16.3" cy="13.8" r=".7" fill="#1e1e2e"/></g></svg>
<svg class="b" style="left:1762.5px;top:600.1px;overflow:visible" width="28" height="28" viewBox="0 0 28 28"><circle cx="14" cy="14" r="14" fill="#f87a30"/><clipPath id="c16"><circle cx="14" cy="14" r="14"/></clipPath><g clip-path="url(#c16)"><path d="M3.5 30c0-6 4.5-8.5 10.5-8.5s10.5 2.5 10.5 8.5z" fill="#35b050"/><rect x="11.8" y="17" width="4.4" height="5.5" fill="#efb893"/><ellipse cx="14" cy="13.3" rx="6.3" ry="6.9" fill="#efb893"/><path d="M7.5 13c0-5 2.8-7.3 6.5-7.3s6.5 2.3 6.5 7.3c-1.4-1.7-3.6-2.8-6.5-2.8s-5.1 1.1-6.5 2.8z" fill="#3a2a28"/><path d="M10.5 17.8c1.1-.9 2.3-1.1 3.5-1.1s2.4.2 3.5 1.1c-.9.4-2.3.5-3.5.5s-2.6-.1-3.5-.5zM13.1 18.2h1.8l-.35 4.3h-1.1z" fill="#3a2a28"/><circle cx="11.7" cy="13.8" r=".7" fill="#1e1e2e"/><circle cx="16.3" cy="13.8" r=".7" fill="#1e1e2e"/></g></svg>
<svg class="b" style="left:1037.5px;top:639.4px;overflow:visible" width="28" height="28" viewBox="0 0 28 28"><circle cx="14" cy="14" r="14" fill="#55b865"/><clipPath id="c17"><circle cx="14" cy="14" r="14"/></clipPath><g clip-path="url(#c17)"><path d="M6.5 25V12C6.5 6.5 9.8 4 14 4s7.5 2.5 7.5 8V25z" fill="#0f1735"/><path d="M3.5 30c0-6 4.5-8.5 10.5-8.5s10.5 2.5 10.5 8.5z" fill="#0f1735"/><path d="M5 26l4.5-3h9l4.5 3-2 3H7z" fill="#ee6a2a"/><path d="M8.5 21h11v5.5h-11z" fill="#0f1735"/><rect x="11.8" y="17" width="4.4" height="5.5" fill="#f0c4a6"/><ellipse cx="14" cy="13.3" rx="6.3" ry="6.9" fill="#f0c4a6"/><path d="M7.6 12.2c0-4.6 2.6-7.2 6.4-7.2s6.4 2.6 6.4 7.2c-2.3-1-4-2.8-4.6-4-1.2 1.4-4.6 3.4-8.2 4z" fill="#0f1735"/><circle cx="11.7" cy="13.8" r=".7" fill="#1e1e2e"/><circle cx="16.3" cy="13.8" r=".7" fill="#1e1e2e"/></g></svg>
<svg class="b" style="left:1738.3px;top:639.4px;overflow:visible" width="28" height="28" viewBox="0 0 28 28"><circle cx="14" cy="14" r="14" fill="#55b865"/><clipPath id="c18"><circle cx="14" cy="14" r="14"/></clipPath><g clip-path="url(#c18)"><path d="M6.5 25V12C6.5 6.5 9.8 4 14 4s7.5 2.5 7.5 8V25z" fill="#0f1735"/><path d="M3.5 30c0-6 4.5-8.5 10.5-8.5s10.5 2.5 10.5 8.5z" fill="#0f1735"/><path d="M5 26l4.5-3h9l4.5 3-2 3H7z" fill="#ee6a2a"/><path d="M8.5 21h11v5.5h-11z" fill="#0f1735"/><rect x="11.8" y="17" width="4.4" height="5.5" fill="#f0c4a6"/><ellipse cx="14" cy="13.3" rx="6.3" ry="6.9" fill="#f0c4a6"/><path d="M7.6 12.2c0-4.6 2.6-7.2 6.4-7.2s6.4 2.6 6.4 7.2c-2.3-1-4-2.8-4.6-4-1.2 1.4-4.6 3.4-8.2 4z" fill="#0f1735"/><circle cx="11.7" cy="13.8" r=".7" fill="#1e1e2e"/><circle cx="16.3" cy="13.8" r=".7" fill="#1e1e2e"/></g></svg>
<svg class="b" style="left:1762.5px;top:639.4px;overflow:visible" width="28" height="28" viewBox="0 0 28 28"><circle cx="14" cy="14" r="14" fill="#5a80d8"/><clipPath id="c19"><circle cx="14" cy="14" r="14"/></clipPath><g clip-path="url(#c19)"><path d="M3.5 30c0-6 4.5-8.5 10.5-8.5s10.5 2.5 10.5 8.5z" fill="#7048d0"/><rect x="11.8" y="17" width="4.4" height="5.5" fill="#7a4a3a"/><ellipse cx="14" cy="13.3" rx="6.3" ry="6.9" fill="#7a4a3a"/><path d="M7.2 13c-1.2-5 1.5-9 6.8-9s8 4 6.8 9c-.6-2.2-2-3.6-3.2-3.6-1.2.9-5.8.9-7.2 0-1.2 0-2.6 1.4-3.2 3.6z" fill="#3a2525"/><circle cx="11.7" cy="13.8" r=".7" fill="#1e1e2e"/><circle cx="16.3" cy="13.8" r=".7" fill="#1e1e2e"/></g><circle cx="14" cy="14" r="14.6" fill="none" stroke="#fff" stroke-width="1.3"/></svg>
<svg class="b" style="left:1786.7px;top:639.4px;overflow:visible" width="28" height="28" viewBox="0 0 28 28"><circle cx="14" cy="14" r="14" fill="#f87a30"/><clipPath id="c20"><circle cx="14" cy="14" r="14"/></clipPath><g clip-path="url(#c20)"><path d="M3.5 30c0-6 4.5-8.5 10.5-8.5s10.5 2.5 10.5 8.5z" fill="#35b050"/><rect x="11.8" y="17" width="4.4" height="5.5" fill="#efb893"/><ellipse cx="14" cy="13.3" rx="6.3" ry="6.9" fill="#efb893"/><path d="M7.5 13c0-5 2.8-7.3 6.5-7.3s6.5 2.3 6.5 7.3c-1.4-1.7-3.6-2.8-6.5-2.8s-5.1 1.1-6.5 2.8z" fill="#3a2a28"/><path d="M10.5 17.8c1.1-.9 2.3-1.1 3.5-1.1s2.4.2 3.5 1.1c-.9.4-2.3.5-3.5.5s-2.6-.1-3.5-.5zM13.1 18.2h1.8l-.35 4.3h-1.1z" fill="#3a2a28"/><circle cx="11.7" cy="13.8" r=".7" fill="#1e1e2e"/><circle cx="16.3" cy="13.8" r=".7" fill="#1e1e2e"/></g><circle cx="14" cy="14" r="14.6" fill="none" stroke="#fff" stroke-width="1.3"/></svg>
<svg class="b" style="left:1037.5px;top:678.6px;overflow:visible" width="28" height="28" viewBox="0 0 28 28"><circle cx="14" cy="14" r="14" fill="#55b865"/><clipPath id="c21"><circle cx="14" cy="14" r="14"/></clipPath><g clip-path="url(#c21)"><path d="M6.5 25V12C6.5 6.5 9.8 4 14 4s7.5 2.5 7.5 8V25z" fill="#0f1735"/><path d="M3.5 30c0-6 4.5-8.5 10.5-8.5s10.5 2.5 10.5 8.5z" fill="#0f1735"/><path d="M5 26l4.5-3h9l4.5 3-2 3H7z" fill="#ee6a2a"/><path d="M8.5 21h11v5.5h-11z" fill="#0f1735"/><rect x="11.8" y="17" width="4.4" height="5.5" fill="#f0c4a6"/><ellipse cx="14" cy="13.3" rx="6.3" ry="6.9" fill="#f0c4a6"/><path d="M7.6 12.2c0-4.6 2.6-7.2 6.4-7.2s6.4 2.6 6.4 7.2c-2.3-1-4-2.8-4.6-4-1.2 1.4-4.6 3.4-8.2 4z" fill="#0f1735"/><circle cx="11.7" cy="13.8" r=".7" fill="#1e1e2e"/><circle cx="16.3" cy="13.8" r=".7" fill="#1e1e2e"/></g></svg>
<svg class="b" style="left:1762.5px;top:678.6px;overflow:visible" width="28" height="28" viewBox="0 0 28 28"><circle cx="14" cy="14" r="14" fill="#f2c245"/><clipPath id="c22"><circle cx="14" cy="14" r="14"/></clipPath><g clip-path="url(#c22)"><path d="M6.5 25V12C6.5 6.5 9.8 4 14 4s7.5 2.5 7.5 8V25z" fill="#14183a"/><path d="M3.5 30c0-6 4.5-8.5 10.5-8.5s10.5 2.5 10.5 8.5z" fill="#2d3a66"/><rect x="11.8" y="17" width="4.4" height="5.5" fill="#f3c6a5"/><ellipse cx="14" cy="13.3" rx="6.3" ry="6.9" fill="#f3c6a5"/><path d="M7.6 12.2c0-4.6 2.6-7.2 6.4-7.2s6.4 2.6 6.4 7.2c-2.3-1-4-2.8-4.6-4-1.2 1.4-4.6 3.4-8.2 4z" fill="#14183a"/><circle cx="11.7" cy="13.8" r=".7" fill="#1e1e2e"/><circle cx="16.3" cy="13.8" r=".7" fill="#1e1e2e"/></g></svg>
<svg class="b" style="left:1037.5px;top:717.8px" width="28" height="28" viewBox="0 0 28 28" fill="none" stroke="#c3c6d4" stroke-width="1.3"><circle cx="14" cy="14" r="13.2"/><circle cx="14" cy="11.3" r="5.4"/><path d="M5 24c2.2-4.3 5.3-6.2 9-6.2s6.8 1.9 9 6.2"/></svg>
<svg class="b" style="left:1762.5px;top:717.8px;overflow:visible" width="28" height="28" viewBox="0 0 28 28"><circle cx="14" cy="14" r="14" fill="#55b865"/><clipPath id="c24"><circle cx="14" cy="14" r="14"/></clipPath><g clip-path="url(#c24)"><path d="M6.5 25V12C6.5 6.5 9.8 4 14 4s7.5 2.5 7.5 8V25z" fill="#0f1735"/><path d="M3.5 30c0-6 4.5-8.5 10.5-8.5s10.5 2.5 10.5 8.5z" fill="#0f1735"/><path d="M5 26l4.5-3h9l4.5 3-2 3H7z" fill="#ee6a2a"/><path d="M8.5 21h11v5.5h-11z" fill="#0f1735"/><rect x="11.8" y="17" width="4.4" height="5.5" fill="#f0c4a6"/><ellipse cx="14" cy="13.3" rx="6.3" ry="6.9" fill="#f0c4a6"/><path d="M7.6 12.2c0-4.6 2.6-7.2 6.4-7.2s6.4 2.6 6.4 7.2c-2.3-1-4-2.8-4.6-4-1.2 1.4-4.6 3.4-8.2 4z" fill="#0f1735"/><circle cx="11.7" cy="13.8" r=".7" fill="#1e1e2e"/><circle cx="16.3" cy="13.8" r=".7" fill="#1e1e2e"/></g></svg>
<svg class="b" style="left:1661.5px;top:122.0px;overflow:visible" width="25" height="25" viewBox="0 0 28 28"><circle cx="14" cy="14" r="14" fill="#f2c245"/><clipPath id="c25"><circle cx="14" cy="14" r="14"/></clipPath><g clip-path="url(#c25)"><path d="M6.5 25V12C6.5 6.5 9.8 4 14 4s7.5 2.5 7.5 8V25z" fill="#14183a"/><path d="M3.5 30c0-6 4.5-8.5 10.5-8.5s10.5 2.5 10.5 8.5z" fill="#2d3a66"/><rect x="11.8" y="17" width="4.4" height="5.5" fill="#f3c6a5"/><ellipse cx="14" cy="13.3" rx="6.3" ry="6.9" fill="#f3c6a5"/><path d="M7.6 12.2c0-4.6 2.6-7.2 6.4-7.2s6.4 2.6 6.4 7.2c-2.3-1-4-2.8-4.6-4-1.2 1.4-4.6 3.4-8.2 4z" fill="#14183a"/><circle cx="11.7" cy="13.8" r=".7" fill="#1e1e2e"/><circle cx="16.3" cy="13.8" r=".7" fill="#1e1e2e"/></g></svg>
</div>
<div id="ov"></div>
<div class="b" style="left:1901.6px;top:83.0px;width:1.2px;height:640.0px;background:#9599b0;"></div>
<div class="b" style="left:17.5px;top:19.0px;width:1885.0px;height:64.0px;background:#fff;border-radius:5px 5px 0 0;box-shadow:0 1px 2px rgba(0,0,20,0.35);"></div>
<div class="b" style="left:40.2px;top:40.8px;width:20.6px;height:20.6px;background:#dd4418;border-radius:50%;"></div>
<div class="b" style="left:71.5px;top:40.8px;width:20.6px;height:20.6px;background:#f5a832;border-radius:50%;"></div>
<div class="b" style="left:102.5px;top:40.8px;width:20.6px;height:20.6px;background:#29cd84;border-radius:50%;"></div>
<svg class="b" style="left:148.0px;top:40.0px;stroke:#b9b9bf;stroke-width:1.6;" width="14" height="22" viewBox="0 0 14 22" fill="none" stroke="#24252b" stroke-width="1.5" stroke-linecap="round" stroke-linejoin="round"><path d="M11 3L3.5 11 11 19"/></svg>
<svg class="b" style="left:176.0px;top:40.0px;stroke:#b9b9bf;stroke-width:1.6;" width="14" height="22" viewBox="0 0 14 22" fill="none" stroke="#24252b" stroke-width="1.5" stroke-linecap="round" stroke-linejoin="round"><path d="M3 3l7.5 8L3 19"/></svg>
<div class="b" style="left:1464.0px;top:402.0px;width:227.0px;height:306.0px;background:#fff;box-shadow:8px 6px 18px rgba(0,0,0,0.28);"></div>
<div class="b" style="left:1466.5px;top:414.0px;width:2.8px;height:283.0px;background:#dcdde3;"></div>
<div class="b" style="left:1574px;top:396px;width:0;height:0;border-style:solid;border-width:0 6px 5px 6px;border-color:transparent transparent #6d7390 transparent;"></div>
<div class="b" style="left:1496.0px;top:430.5px;width:166.0px;height:34.5px;background:#f0ad55;border-radius:3px;"></div>
<div class="t" style="left:1379.0px;width:400px;text-align:center;top:440.72px;font-size:15.3px;color:#fff;">In review</div>
<div class="b" style="left:1496.0px;top:474.0px;width:166.0px;height:34.7px;background:#5bc47c;border-radius:3px;"></div>
<div class="t" style="left:1379.0px;width:400px;text-align:center;top:484.32px;font-size:15.3px;color:#fff;">Approved</div>
<div class="b" style="left:1496.0px;top:518.0px;width:166.0px;height:33.5px;background:#cf4150;border-radius:3px;"></div>
<div class="t" style="left:1379.0px;width:400px;text-align:center;top:527.72px;font-size:15.3px;color:#fff;">Rejected</div>
<div class="b" style="left:1496.0px;top:561.0px;width:166.0px;height:34.0px;background:#9157d9;border-radius:3px;"></div>
<div class="t" style="left:1379.0px;width:400px;text-align:center;top:570.97px;font-size:15.3px;color:#fff;">Pending review</div>
<div class="b" style="left:1496.0px;top:605.0px;width:166.0px;height:34.5px;background:#c4c4c4;border-radius:3px;"></div>
<div class="t" style="left:1379.0px;width:400px;text-align:center;top:615.22px;font-size:15.3px;color:#fff;">Not started</div>
<div class="b" style="left:1487.0px;top:657.0px;width:183.4px;height:1.6px;background:#e4e6f0;"></div>
<svg class="b" style="left:1526.0px;top:674.0px;stroke:#323338;stroke-width:1.6;" width="22" height="21" viewBox="0 0 22 21" fill="none" stroke="#24252b" stroke-width="1.5" stroke-linecap="round" stroke-linejoin="round"><path d="M3.5 18.5l1-4.5L15 3.5a2 2 0 0 1 3 3L7.5 17z"/></svg>
<div class="t" style="left:1557.4px;top:676.62px;font-size:15px;color:#24252b;">Edit Labels</div>
<div class="b" style="left:1462.6px;top:400.8px;width:231.2px;height:309.9px;border:5px solid #ff6600;border-radius:14px;"></div>
<div class="b" style="left:1453.2px;top:240.9px;width:42.1px;height:41.7px;background:#ff6600;border-radius:3px;box-shadow:0 1px 3px rgba(0,0,0,0.25);"></div>
<div class="t" style="left:1274.2px;width:400px;text-align:center;top:249.20px;font-size:26.5px;color:#fff;font-weight:bold;">B</div>
<svg class="b" style="left:1455px;top:290px" width="40" height="115" viewBox="0 0 40 115"><path d="M19 5L5.8 36h26.6z" fill="#ff6600"/><rect x="16.5" y="30" width="5" height="82" fill="#ff6600"/></svg>
</body></html>
